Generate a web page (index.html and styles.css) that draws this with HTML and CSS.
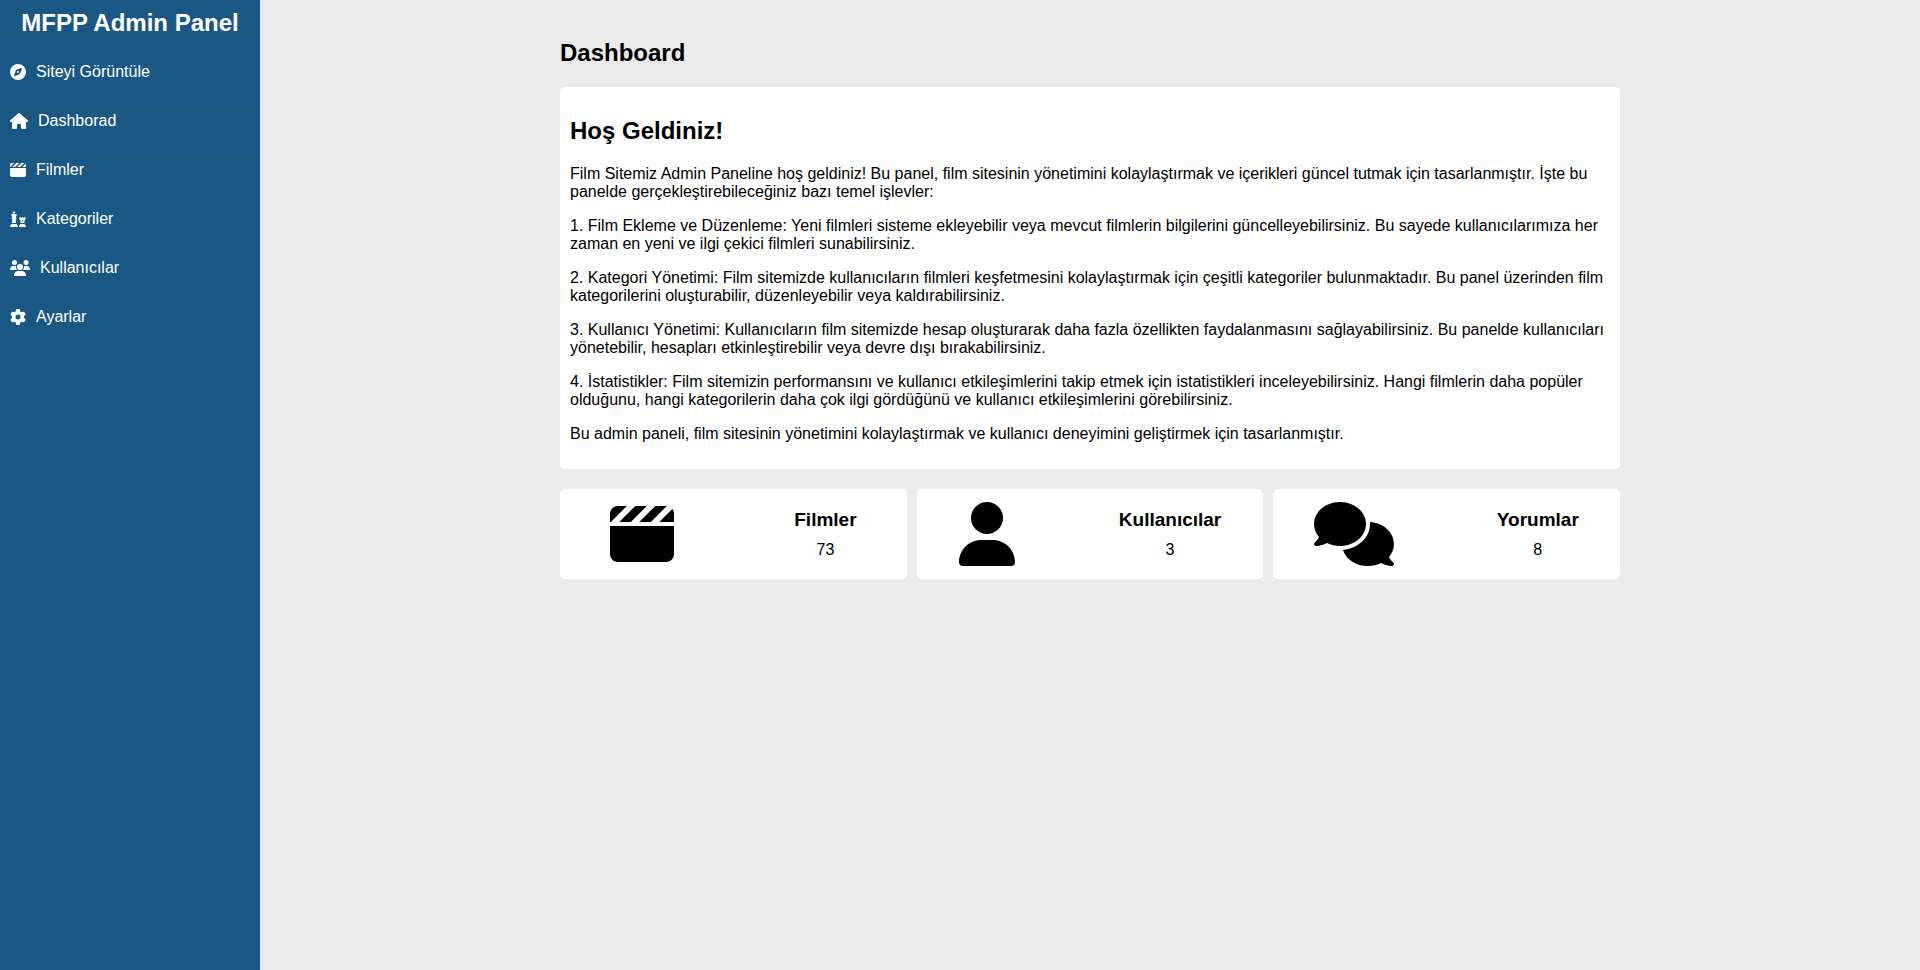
FILE: index.html
```html
<!DOCTYPE html>
<html lang="tr">
<head>
<meta charset="utf-8">
<title>MFPP Admin Panel</title>
<link rel="stylesheet" href="styles.css">
</head>
<body>
<div class="layout">
  <aside class="sidebar">
    <h2 class="brand">MFPP Admin Panel</h2>
    <nav class="menu">
      <a class="menu-link" href="#site"><svg class="menu-icon" viewBox="0 0 512 512" aria-hidden="true"><path d="M256 512A256 256 0 1 0 256 0a256 256 0 1 0 0 512zm50.7-186.9L162.4 380.6c-19.4 7.5-38.5-11.6-31-31l55.5-144.3c3.3-8.5 9.9-15.1 18.4-18.4l144.3-55.5c19.4-7.5 38.5 11.6 31 31L325.1 306.7c-3.2 8.5-9.9 15.1-18.4 18.4zM288 256a32 32 0 1 0 -64 0 32 32 0 1 0 64 0z"/></svg>Siteyi Görüntüle</a>
      <a class="menu-link" href="#dashboard"><svg class="menu-icon" viewBox="0 0 576 512" aria-hidden="true"><path d="M575.8 255.5c0 18-15 32.1-32 32.1h-32l.7 160.2c0 2.7-.2 5.4-.5 8.1V472c0 22.1-17.9 40-40 40H456c-1.1 0-2.2 0-3.3-.1c-1.4 .1-2.8 .1-4.2 .1H416 392c-22.1 0-40-17.9-40-40V448 384c0-17.7-14.3-32-32-32H256c-17.7 0-32 14.3-32 32v64 24c0 22.1-17.9 40-40 40H160 128.1c-1.5 0-3-.1-4.5-.2c-1.2 .1-2.4 .2-3.6 .2H104c-22.1 0-40-17.9-40-40V360c0-.9 0-1.9 .1-2.8V287.6H32c-18 0-32-14-32-32.1c0-9 3-17 10-24L266.4 8c7-7 15-8 22-8s15 2 21 7L564.8 231.5c8 7 12 15 11 24z"/></svg>Dashborad</a>
      <a class="menu-link" href="#filmler"><svg class="menu-icon" viewBox="0 0 512 512" aria-hidden="true"><path d="M448 32H361.9l-1 1-127 127h92.1l1-1L453.8 32.3c-1.9-.2-3.8-.3-5.8-.3zm64 128V96c0-15.1-5.3-29.1-14-40l-104 104H512zM294.1 32H201.9l-1 1L73.9 160h92.1l1-1 127-127zM64 32C28.7 32 0 60.7 0 96v64H6.1l1-1 127-127H64zM512 192H0V416c0 35.3 28.7 64 64 64H448c35.3 0 64-28.7 64-64V192z"/></svg>Filmler</a>
      <a class="menu-link" href="#kategoriler"><svg class="menu-icon" viewBox="0 0 512 512" aria-hidden="true"><path d="M144 16c0-8.8-7.2-16-16-16s-16 7.2-16 16V32H96c-8.8 0-16 7.2-16 16s7.2 16 16 16h16V96H60.2C49.1 96 40 105.1 40 116.2c0 2.5 .5 4.9 1.3 7.3L73.8 208H72c-13.3 0-24 10.7-24 24s10.7 24 24 24h4L60 384H196L180 256h4c13.3 0 24-10.7 24-24s-10.7-24-24-24h-1.8l32.5-84.5c.9-2.3 1.3-4.8 1.3-7.3c0-11.2-9.1-20.2-20.2-20.2H144V64h16c8.8 0 16-7.2 16-16s-7.2-16-16-16H144V16zM48 416L4.8 473.6C1.7 477.8 0 482.8 0 488c0 13.3 10.7 24 24 24H232c13.3 0 24-10.7 24-24c0-5.2-1.7-10.2-4.8-14.4L208 416H48zm288 0l-43.2 57.6c-3.1 4.2-4.8 9.2-4.8 14.4c0 13.3 10.7 24 24 24H488c13.3 0 24-10.7 24-24c0-5.2-1.7-10.2-4.8-14.4L464 416H336zM304 208v51.9c0 7.8 2.8 15.3 8 21.1L339.2 312 337 384H462.5l-3.3-72 28.3-30.8c5.4-5.9 8.5-13.6 8.5-21.7V208c0-8.8-7.2-16-16-16H464c-8.8 0-16 7.2-16 16v16H424V208c0-8.8-7.2-16-16-16H392c-8.8 0-16 7.2-16 16v16H352V208c0-8.8-7.2-16-16-16H320c-8.8 0-16 7.2-16 16zm80 96c0-8.8 7.2-16 16-16s16 7.2 16 16v32H384V304z"/></svg>Kategoriler</a>
      <a class="menu-link" href="#kullanicilar"><svg class="menu-icon" viewBox="0 0 640 512" aria-hidden="true"><path d="M144 0a80 80 0 1 1 0 160A80 80 0 1 1 144 0zM512 0a80 80 0 1 1 0 160A80 80 0 1 1 512 0zM0 298.7C0 239.8 47.8 192 106.7 192h42.7c15.9 0 31 3.5 44.6 9.7c-1.3 7.2-1.9 14.7-1.9 22.3c0 38.2 16.8 72.5 43.3 96c-.2 0-.4 0-.7 0H21.3C9.6 320 0 310.4 0 298.7zM405.3 320c-.2 0-.4 0-.7 0c26.6-23.5 43.3-57.8 43.3-96c0-7.6-.7-15-1.9-22.3c13.6-6.3 28.7-9.7 44.6-9.7h42.7C592.2 192 640 239.8 640 298.7c0 11.8-9.6 21.3-21.3 21.3H405.3zM224 224a96 96 0 1 1 192 0 96 96 0 1 1 -192 0zM128 485.3C128 411.7 187.7 352 261.3 352H378.7C452.3 352 512 411.7 512 485.3c0 14.7-11.9 26.7-26.7 26.7H154.7c-14.7 0-26.7-11.9-26.7-26.7z"/></svg>Kullanıcılar</a>
      <a class="menu-link" href="#ayarlar"><svg class="menu-icon" viewBox="0 0 512 512" aria-hidden="true"><path d="M495.9 166.6c3.2 8.7 .5 18.4-6.4 24.6l-43.3 39.4c1.1 8.3 1.7 16.8 1.7 25.4s-.6 17.1-1.7 25.4l43.3 39.4c6.9 6.2 9.6 15.9 6.4 24.6c-4.4 11.9-9.7 23.3-15.8 34.3l-4.7 8.1c-6.6 11-14 21.4-22.1 31.2c-5.9 7.2-15.7 9.6-24.5 6.8l-55.7-17.7c-13.4 10.3-28.2 18.9-44 25.4l-12.5 57.1c-2 9.1-9 16.3-18.2 17.8c-13.8 2.3-28 3.5-42.5 3.5s-28.7-1.2-42.5-3.5c-9.2-1.5-16.2-8.7-18.2-17.8l-12.5-57.1c-15.8-6.5-30.6-15.1-44-25.4L83.1 425.9c-8.8 2.8-18.6 .3-24.5-6.8c-8.1-9.8-15.5-20.2-22.1-31.2l-4.7-8.1c-6.1-11-11.4-22.4-15.8-34.3c-3.2-8.7-.5-18.4 6.4-24.6l43.3-39.4C64.6 273.1 64 264.6 64 256s.6-17.1 1.7-25.4L22.4 191.2c-6.9-6.2-9.6-15.9-6.4-24.6c4.4-11.9 9.7-23.3 15.8-34.3l4.7-8.1c6.6-11 14-21.4 22.1-31.2c5.9-7.2 15.7-9.6 24.5-6.8l55.7 17.7c13.4-10.3 28.2-18.9 44-25.4l12.5-57.1c2-9.1 9-16.3 18.2-17.8C227.3 1.2 241.5 0 256 0s28.7 1.2 42.5 3.5c9.2 1.5 16.2 8.7 18.2 17.8l12.5 57.1c15.8 6.5 30.6 15.1 44 25.4l55.7-17.7c8.8-2.8 18.6-.3 24.5 6.8c8.1 9.8 15.5 20.2 22.1 31.2l4.7 8.1c6.1 11 11.4 22.4 15.8 34.3zM256 336a80 80 0 1 0 0-160 80 80 0 1 0 0 160z"/></svg>Ayarlar</a>
    </nav>
  </aside>
  <main class="content">
    <div class="container">
      <h2 class="title">Dashboard</h2>
      <section class="card welcome">
        <h2 class="title">Hoş Geldiniz!</h2>
        <p>Film Sitemiz Admin Paneline hoş geldiniz! Bu panel, film sitesinin yönetimini kolaylaştırmak ve içerikleri güncel tutmak için tasarlanmıştır. İşte bu panelde gerçekleştirebileceğiniz bazı temel işlevler:</p>
        <p>1. Film Ekleme ve Düzenleme: Yeni filmleri sisteme ekleyebilir veya mevcut filmlerin bilgilerini güncelleyebilirsiniz. Bu sayede kullanıcılarımıza her zaman en yeni ve ilgi çekici filmleri sunabilirsiniz.</p>
        <p>2. Kategori Yönetimi: Film sitemizde kullanıcıların filmleri keşfetmesini kolaylaştırmak için çeşitli kategoriler bulunmaktadır. Bu panel üzerinden film kategorilerini oluşturabilir, düzenleyebilir veya kaldırabilirsiniz.</p>
        <p>3. Kullanıcı Yönetimi: Kullanıcıların film sitemizde hesap oluşturarak daha fazla özellikten faydalanmasını sağlayabilirsiniz. Bu panelde kullanıcıları yönetebilir, hesapları etkinleştirebilir veya devre dışı bırakabilirsiniz.</p>
        <p>4. İstatistikler: Film sitemizin performansını ve kullanıcı etkileşimlerini takip etmek için istatistikleri inceleyebilirsiniz. Hangi filmlerin daha popüler olduğunu, hangi kategorilerin daha çok ilgi gördüğünü ve kullanıcı etkileşimlerini görebilirsiniz.</p>
        <p>Bu admin paneli, film sitesinin yönetimini kolaylaştırmak ve kullanıcı deneyimini geliştirmek için tasarlanmıştır.</p>
      </section>
      <div class="stats">
        <section class="card stat">
          <svg class="stat-icon" viewBox="0 0 512 512" aria-hidden="true"><path d="M448 32H361.9l-1 1-127 127h92.1l1-1L453.8 32.3c-1.9-.2-3.8-.3-5.8-.3zm64 128V96c0-15.1-5.3-29.1-14-40l-104 104H512zM294.1 32H201.9l-1 1L73.9 160h92.1l1-1 127-127zM64 32C28.7 32 0 60.7 0 96v64H6.1l1-1 127-127H64zM512 192H0V416c0 35.3 28.7 64 64 64H448c35.3 0 64-28.7 64-64V192z"/></svg>
          <div class="stat-text"><h3>Filmler</h3><span>73</span></div>
        </section>
        <section class="card stat">
          <svg class="stat-icon" viewBox="0 0 448 512" aria-hidden="true"><path d="M224 256A128 128 0 1 0 224 0a128 128 0 1 0 0 256zm-45.7 48C79.8 304 0 383.8 0 482.3C0 498.7 13.3 512 29.7 512H418.3c16.4 0 29.7-13.3 29.7-29.7C448 383.8 368.2 304 269.7 304H178.3z"/></svg>
          <div class="stat-text"><h3>Kullanıcılar</h3><span>3</span></div>
        </section>
        <section class="card stat">
          <svg class="stat-icon" viewBox="0 0 640 512" aria-hidden="true"><path d="M208 352c114.9 0 208-78.8 208-176S322.9 0 208 0S0 78.8 0 176c0 38.6 14.7 74.3 39.6 103.4c-3.5 9.4-8.7 17.7-14.2 24.7c-4.8 6.2-9.7 11-13.3 14.3c-1.8 1.6-3.3 2.9-4.3 3.7c-.5 .4-.9 .7-1.1 .8l-.2 .2C1 327.2-1.4 334.4 .8 340.9S9.1 352 16 352c21.8 0 43.8-5.6 62.1-12.5c9.2-3.5 17.8-7.4 25.2-11.4C134.1 343.3 169.8 352 208 352zM448 176c0 112.3-99.1 196.9-216.5 207C255.8 457.4 336.4 512 432 512c38.2 0 73.9-8.7 104.7-23.9c7.5 4 16 7.9 25.2 11.4c18.3 6.9 40.3 12.5 62.1 12.5c6.9 0 13.1-4.5 15.2-11.1c2.1-6.6-.2-13.8-5.8-17.9l-.2-.2c-.2-.2-.6-.4-1.1-.8c-1-.8-2.5-2-4.3-3.7c-3.6-3.3-8.5-8.1-13.3-14.3c-5.5-7-10.7-15.4-14.2-24.7c24.9-29 39.6-64.7 39.6-103.4c0-92.8-84.9-168.9-192.6-175.5c.4 5.1 .6 10.3 .6 15.5z"/></svg>
          <div class="stat-text"><h3>Yorumlar</h3><span>8</span></div>
        </section>
      </div>
    </div>
  </main>
</div>
</body>
</html>
```

FILE: styles.css
```css
* {
  box-sizing: border-box;
}

body {
  margin: 0;
  background: #ebebeb;
  color: #000;
  font: 16px/18px "Liberation Sans", Arial, sans-serif;
}

.layout {
  display: flex;
  min-height: 100vh;
}

.sidebar {
  flex: 0 0 260px;
  background: #195885;
  color: #fff;
}

.brand {
  margin: 0;
  padding: 10px 10px 11px;
  border-bottom: 1px solid #1a559b;
  font-size: 24px;
  line-height: 26px;
  text-align: center;
}

.menu-link {
  display: flex;
  align-items: center;
  gap: 10px;
  padding: 15px 10px;
  border-bottom: 1px solid #1a559b;
  color: #fff;
  text-decoration: none;
}

.menu-icon {
  height: 16px;
  fill: currentColor;
}

.content {
  flex: 1;
  padding: 19px;
}

.container {
  max-width: 1060px;
  margin: 0 auto;
}

.title {
  margin: 21px 0;
  font-size: 24px;
  line-height: 26px;
}

.card {
  border-radius: 5px;
  background: #fff;
}

.welcome {
  display: flow-root;
  padding: 10px;
}

.welcome p {
  margin: 16px 0;
}

.stats {
  display: grid;
  grid-template-columns: repeat(3, 1fr);
  gap: 10px;
  margin-top: 20px;
}

.stat {
  display: flex;
  align-items: center;
  justify-content: space-around;
  gap: 20px;
  min-height: 90px;
}

.stat-icon {
  height: 64px;
}

.stat-text {
  text-align: center;
}

.stat-text h3 {
  margin: 0 0 10px;
  font-size: 19px;
  line-height: 22px;
}
```
